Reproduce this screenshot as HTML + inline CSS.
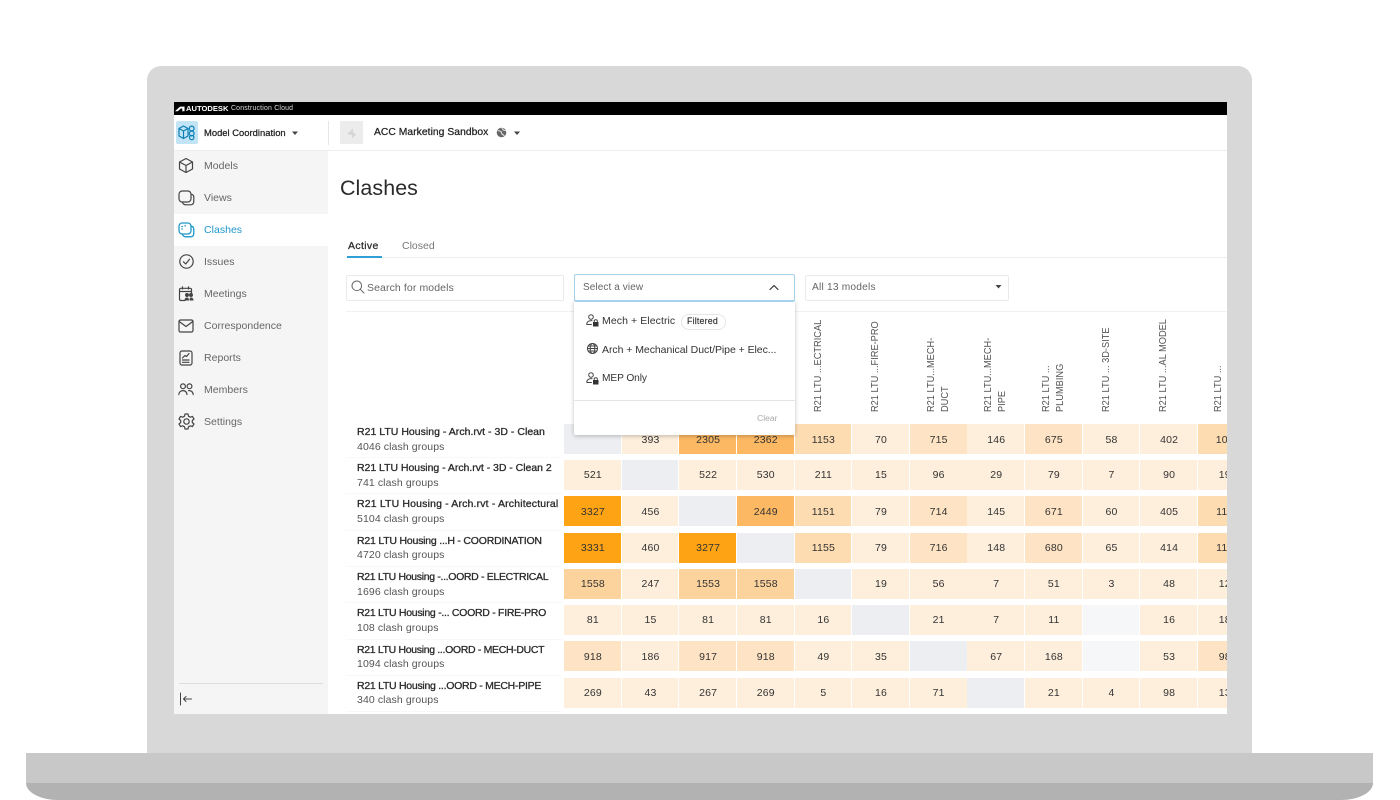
<!DOCTYPE html>
<html><head><meta charset="utf-8"><title>Clashes</title>
<style>
html,body{margin:0;padding:0;background:#fff}
body{width:1400px;height:800px;position:relative;overflow:hidden;font-family:"Liberation Sans",sans-serif;color:#333}
.b{position:absolute}
.t{position:absolute;white-space:nowrap;line-height:14px;font-size:10.5px;letter-spacing:.1px}
#screen{position:absolute;left:174px;top:102px;width:1053px;height:612px;background:#fff;overflow:hidden}
.nav{position:absolute;left:30px;color:#666;font-size:10.5px;letter-spacing:.02px;line-height:14px;white-space:nowrap}
svg{position:absolute;fill:none;stroke-linecap:round;stroke-linejoin:round}
.ic{stroke:#444;stroke-width:1.2}
.row{position:absolute;left:390px;display:flex;height:30px}
.row div{width:56.8px;margin-right:.84px;flex:none;height:30px;line-height:31px;text-align:center;text-indent:1px;font-size:10.5px;color:#333;letter-spacing:.2px}
.row.l div{line-height:33px}
.row div:nth-child(12){text-indent:-3px}
.a{background:#fea414}.p{background:#fcb862}.c{background:#fdd39d}.d{background:#fddcb2}.e{background:#fee4c4}.f{background:#feefdc}.x{background:#eceef1}.y{background:#f6f7f9}
.name{position:absolute;left:183px;font-size:10.5px;color:#2a2a2a;-webkit-text-stroke:.3px #2a2a2a;letter-spacing:.02px;white-space:nowrap;line-height:14px}
.sub{position:absolute;left:183px;font-size:10.5px;color:#555;letter-spacing:.1px;white-space:nowrap;line-height:14px}
.sep{position:absolute;left:172px;width:216px;height:1px;background:#f8f8f8}
.h{position:absolute;top:310px;transform:rotate(-90deg) scaleX(.88);transform-origin:0 0;white-space:nowrap;font-size:10.5px;line-height:12px;color:#555}
</style></head><body>
<div class="b" style="left:147px;top:66px;width:1105px;height:687px;background:#d8d8d9;border-radius:14px 14px 0 0"></div>
<div class="b" style="left:26px;top:753px;width:1347px;height:30px;background:#c8c8c8"></div>
<div class="b" style="left:26px;top:783px;width:1347px;height:17px;background:#b2b2b2;border-radius:0 0 32px 32px / 0 0 17px 17px"></div>

<div id="screen">
 <div class="b" style="left:0;top:0;width:1053px;height:13px;background:#000"></div>
 <svg style="left:1px;top:3px" width="10" height="7" viewBox="0 0 11 7"><path d="M0 6.5L5.5 1.5H10.5V6.5H8V3.5H6.5L3 6.5Z" fill="#fff"/></svg>
 <div class="t" style="left:12px;top:0;font-size:7.6px;font-weight:bold;color:#fff;line-height:13px;letter-spacing:0">AUTODESK</div>
 <div class="t" style="left:57px;top:0;font-size:6.9px;color:#ddd;line-height:13px;letter-spacing:.2px">Construction Cloud</div>

 <div class="b" style="left:0;top:48px;width:1053px;height:1px;background:#eee"></div>
 <div class="b" style="left:2px;top:19px;width:22px;height:23px;background:#c3e4f5;border-radius:2px"></div>
 <svg style="left:4px;top:22px" width="18" height="17" viewBox="0 0 18 17" stroke="#0a7fb5" stroke-width="1.2"><path d="M1 4.5L5.5 2L10 4.5V12L5.5 14.5L1 12ZM1 4.5L5.5 7L10 4.5M5.5 7V14.5"/><circle cx="13.7" cy="4.5" r="2.4"/><circle cx="13.7" cy="9.5" r="2.4"/><circle cx="13.7" cy="13.5" r="2.2"/></svg>
 <div class="t" style="left:30px;top:24px;font-size:9.4px;color:#222;letter-spacing:.02px;-webkit-text-stroke:.25px #222">Model Coordination</div>
 <svg style="left:117px;top:29px" width="8" height="5" viewBox="0 0 8 5"><path d="M1 .5H7L4 4Z" fill="#444"/></svg>
 <div class="b" style="left:154px;top:19px;width:1px;height:24px;background:#e6e6e6"></div>
 <div class="b" style="left:166px;top:19px;width:23px;height:23px;background:#ececec"></div>
 <svg style="left:170px;top:24px" width="15" height="14" viewBox="0 0 15 14"><path d="M3 8L9 2.5V6L12 9L8 12L8 9Z" fill="#d5d5d5"/></svg>
 <div class="t" style="left:200px;top:24px;font-size:10.3px;color:#222;letter-spacing:.05px;-webkit-text-stroke:.25px #222">ACC Marketing Sandbox</div>
 <svg style="left:322px;top:25px" width="11" height="11" viewBox="0 0 11 11"><circle cx="5.5" cy="5.5" r="4.8" fill="#666"/><path d="M2 3.5L5 4.5L6 7L8 8.5M6 1.5L8 3.5L10 3.5" stroke="#ddd" stroke-width="1.1"/></svg>
 <svg style="left:339px;top:29px" width="8" height="5" viewBox="0 0 8 5"><path d="M1 .5H7L4 4Z" fill="#444"/></svg>

 <!-- sidebar -->
 <div class="b" style="left:0;top:49px;width:154px;height:563px;background:#f5f5f5"></div>
 <div class="b" style="left:0;top:112px;width:154px;height:32px;background:#fff"></div>
 <div class="nav" style="top:57px">Models</div>
 <div class="nav" style="top:89px">Views</div>
 <div class="nav" style="top:121px;color:#1f97c9">Clashes</div>
 <div class="nav" style="top:153px">Issues</div>
 <div class="nav" style="top:185px">Meetings</div>
 <div class="nav" style="top:217px">Correspondence</div>
 <div class="nav" style="top:249px">Reports</div>
 <div class="nav" style="top:281px">Members</div>
 <div class="nav" style="top:313px">Settings</div>

 <svg class="ic" style="left:4px;top:55px" width="16" height="17" viewBox="0 0 16 17"><path d="M8 1.5L14.5 5V12L8 15.5L1.5 12V5ZM1.5 5L8 8.5L14.5 5M8 8.5V15.5"/></svg>
 <svg class="ic" style="left:4px;top:88px" width="17" height="16" viewBox="0 0 17 16"><rect x="1" y="1" width="12" height="11" rx="3.2"/><path d="M13 4.2C15 4.5 15.8 5.5 15.8 7.2V11.2C15.8 13.5 14.5 14.8 12.2 14.8H8C6 14.8 4.8 14 4.4 12"/></svg>
 <svg style="left:4px;top:120px;stroke:#1f97c9;stroke-width:1.3" width="17" height="16" viewBox="0 0 17 16"><rect x="1" y="1" width="12" height="11" rx="3.2"/><path d="M13 4.2C15 4.5 15.8 5.5 15.8 7.2V11.2C15.8 13.5 14.5 14.8 12.2 14.8H8C6 14.8 4.8 14 4.4 12M4 4.5H4.5M7 3.8H7.5M3.8 7H4.2"/></svg>
 <svg class="ic" style="left:5px;top:152px" width="15" height="15" viewBox="0 0 15 15"><circle cx="7.5" cy="7.5" r="6.7"/><path d="M4.5 7.8L6.7 10L10.5 5.3"/></svg>
 <svg class="ic" style="left:4px;top:184px" width="16" height="16" viewBox="0 0 16 16"><path d="M7 14.5H3C2 14.5 1.5 14 1.5 13V3.5C1.5 2.8 2 2.3 3 2.3H12C13 2.3 13.5 2.8 13.5 3.5V7M1.5 5.5H13.5M4.5 .8V3M10.5 .8V3"/><circle cx="9" cy="9" r="1.4" fill="#444"/><circle cx="13" cy="9" r="1.4" fill="#444"/><path d="M6.5 14.5C6.5 12 8 11.5 9 11.5C10 11.5 11 12 11 14.5ZM11.5 14.5C11.5 12 12 11.5 13 11.5C14 11.5 15.5 12 15.5 14.5Z" fill="#444" stroke="none"/></svg>
 <svg class="ic" style="left:4px;top:217px" width="16" height="14" viewBox="0 0 16 14"><rect x="1" y="1" width="14" height="12" rx="1.5"/><path d="M1.2 2.5L8 7.5L14.8 2.5"/></svg>
 <svg class="ic" style="left:5px;top:248px" width="14" height="16" viewBox="0 0 14 16"><rect x="1" y="1" width="12" height="14" rx="2"/><path d="M3.5 8L6 5.5L7.5 6.5L10 3.5M3.5 10H10M3.5 12.3H10"/></svg>
 <svg class="ic" style="left:4px;top:281px" width="16" height="13" viewBox="0 0 16 13"><circle cx="5" cy="3.3" r="2.4"/><circle cx="11.5" cy="3.3" r="2.4"/><path d="M.8 11.5C1 8.8 3 7.6 5 7.6C7 7.6 8.7 8.8 9 11.5M10.5 7.7C13 7.4 15 8.8 15.2 11.5"/></svg>
 <svg class="ic" style="left:4px;top:311px" width="17" height="17" viewBox="0 0 17 17"><path d="M7 1H10L10.5 3.2L12.3 4.2L14.4 3.4L16 6L14.3 7.5V9.5L16 11L14.4 13.6L12.3 12.8L10.5 13.8L10 16H7L6.5 13.8L4.7 12.8L2.6 13.6L1 11L2.7 9.5V7.5L1 6L2.6 3.4L4.7 4.2L6.5 3.2Z"/><circle cx="8.5" cy="8.5" r="2.7"/></svg>

 <div class="b" style="left:5px;top:581px;width:144px;height:1px;background:#dedede"></div>
 <svg style="left:5px;top:590px;stroke:#444;stroke-width:1" width="15" height="14" viewBox="0 0 15 14"><path d="M1.5 1V13M12.5 7H4.5M7 4.5L4.5 7L7 9.5"/></svg>

 <!-- main -->
 <div class="t" style="left:166px;top:73px;font-size:21.4px;line-height:26px;color:#2a2a2a;letter-spacing:.1px">Clashes</div>
 <div class="t" style="left:174px;top:137px;color:#2a2a2a;letter-spacing:.35px;-webkit-text-stroke:.25px #2a2a2a">Active</div>
 <div class="t" style="left:228px;top:137px;color:#777;letter-spacing:0">Closed</div>
 <div class="b" style="left:172px;top:155px;width:881px;height:1px;background:#eee"></div>
 <div class="b" style="left:173px;top:154px;width:35px;height:2px;background:#2f9fd6"></div>

 <div class="b" style="left:172px;top:173px;width:216px;height:24px;border:1px solid #eaeaea;border-radius:2px"></div>
 <svg style="left:177px;top:178px;stroke:#666;stroke-width:1" width="14" height="14" viewBox="0 0 14 14"><circle cx="5.8" cy="5.8" r="4.8"/><path d="M9.3 9.3L13 13"/></svg>
 <div class="t" style="left:193px;top:179px;color:#666;letter-spacing:.1px">Search for models</div>

 <div class="b" style="left:631px;top:173px;width:202px;height:24px;border:1px solid #eaeaea;border-radius:2px"></div>
 <div class="t" style="left:638px;top:179px;color:#666;font-size:10.2px;letter-spacing:.2px">All 13 models</div>
 <svg style="left:821px;top:183px" width="7" height="4" viewBox="0 0 7 4"><path d="M.5 0H6.5L3.5 3.5Z" fill="#444"/></svg>

 <div class="b" style="left:172px;top:209px;width:881px;height:1px;background:#f2f2f2"></div>

 <!-- rotated headers -->
 <div class="h" style="left:638px">R21 LTU ...ECTRICAL</div>
 <div class="h" style="left:695px">R21 LTU ...FIRE-PRO</div>
 <div class="h" style="left:751px">R21 LTU...MECH-</div>
 <div class="h" style="left:765px">DUCT</div>
 <div class="h" style="left:808px">R21 LTU...MECH-</div>
 <div class="h" style="left:822px">PIPE</div>
 <div class="h" style="left:866px">R21 LTU ...</div>
 <div class="h" style="left:880px">PLUMBING</div>
 <div class="h" style="left:926px">R21 LTU ... 3D-SITE</div>
 <div class="h" style="left:983px">R21 LTU ...AL MODEL</div>
 <div class="h" style="left:1038px">R21 LTU ...</div>

 <!-- rows -->
 <div class="name" style="top:323px">R21 LTU Housing - Arch.rvt - 3D - Clean</div>
 <div class="sub" style="top:338px">4046 clash groups</div>
 <div class="sep" style="top:355px"></div>
 <div class="row l" style="top:322px"><div class="x"></div><div class="f">393</div><div class="p">2305</div><div class="p">2362</div><div class="d">1153</div><div class="f">70</div><div class="e">715</div><div class="f">146</div><div class="e">675</div><div class="f">58</div><div class="f">402</div><div class="d">104</div></div>

 <div class="name" style="top:359px;letter-spacing:-.03px">R21 LTU Housing - Arch.rvt - 3D - Clean 2</div>
 <div class="sub" style="top:374px">741 clash groups</div>
 <div class="sep" style="top:391px"></div>
 <div class="row" style="top:358px"><div class="f">521</div><div class="x"></div><div class="f">522</div><div class="f">530</div><div class="f">211</div><div class="f">15</div><div class="f">96</div><div class="f">29</div><div class="f">79</div><div class="f">7</div><div class="f">90</div><div class="f">19</div></div>

 <div class="name" style="top:395px;letter-spacing:.16px">R21 LTU Housing - Arch.rvt - Architectural</div>
 <div class="sub" style="top:410px">5104 clash groups</div>
 <div class="sep" style="top:428px"></div>
 <div class="row l" style="top:394px"><div class="a">3327</div><div class="f">456</div><div class="x"></div><div class="p">2449</div><div class="d">1151</div><div class="f">79</div><div class="e">714</div><div class="f">145</div><div class="e">671</div><div class="f">60</div><div class="f">405</div><div class="d">115</div></div>

 <div class="name" style="top:432px;letter-spacing:-.21px">R21 LTU Housing ...H - COORDINATION</div>
 <div class="sub" style="top:446px">4720 clash groups</div>
 <div class="sep" style="top:464px"></div>
 <div class="row" style="top:431px"><div class="a">3331</div><div class="f">460</div><div class="a">3277</div><div class="x"></div><div class="d">1155</div><div class="f">79</div><div class="e">716</div><div class="f">148</div><div class="e">680</div><div class="f">65</div><div class="f">414</div><div class="d">116</div></div>

 <div class="name" style="top:468px;letter-spacing:-.33px">R21 LTU Housing -...OORD - ELECTRICAL</div>
 <div class="sub" style="top:483px">1696 clash groups</div>
 <div class="sep" style="top:500px"></div>
 <div class="row" style="top:467px"><div class="c">1558</div><div class="f">247</div><div class="c">1553</div><div class="c">1558</div><div class="x"></div><div class="f">19</div><div class="f">56</div><div class="f">7</div><div class="f">51</div><div class="f">3</div><div class="f">48</div><div class="f">12</div></div>

 <div class="name" style="top:504px;letter-spacing:-.28px">R21 LTU Housing -... COORD - FIRE-PRO</div>
 <div class="sub" style="top:519px">108 clash groups</div>
 <div class="sep" style="top:537px"></div>
 <div class="row" style="top:503px"><div class="f">81</div><div class="f">15</div><div class="f">81</div><div class="f">81</div><div class="f">16</div><div class="x"></div><div class="f">21</div><div class="f">7</div><div class="f">11</div><div class="y"></div><div class="f">16</div><div class="f">18</div></div>

 <div class="name" style="top:541px;letter-spacing:-.33px">R21 LTU Housing ...OORD - MECH-DUCT</div>
 <div class="sub" style="top:555px">1094 clash groups</div>
 <div class="sep" style="top:573px"></div>
 <div class="row l" style="top:539px"><div class="e">918</div><div class="f">186</div><div class="e">917</div><div class="e">918</div><div class="f">49</div><div class="f">35</div><div class="x"></div><div class="f">67</div><div class="f">168</div><div class="y"></div><div class="f">53</div><div class="e">98</div></div>

 <div class="name" style="top:577px;letter-spacing:-.27px">R21 LTU Housing ...OORD - MECH-PIPE</div>
 <div class="sub" style="top:591px">340 clash groups</div>
 <div class="sep" style="top:609px"></div>
 <div class="row" style="top:576px"><div class="f">269</div><div class="f">43</div><div class="f">267</div><div class="f">269</div><div class="f">5</div><div class="f">16</div><div class="f">71</div><div class="x"></div><div class="f">21</div><div class="f">4</div><div class="f">98</div><div class="f">13</div></div>
 <div class="row" style="top:612px"><div class="f"></div></div>

 <!-- dropdown -->
 <div class="b" style="left:400px;top:199px;width:221px;height:134px;background:#fff;box-shadow:0 1px 4px rgba(0,0,0,.25);border-radius:0 0 2px 2px"></div>
 <div class="b" style="left:400px;top:172px;width:219px;height:25px;border:1px solid #a5d2ea;border-bottom:2px solid #a5d2ea;border-radius:2px;background:#fff"></div>
 <div class="t" style="left:409px;top:179px;color:#666;font-size:10px;letter-spacing:.1px">Select a view</div>
 <svg style="left:595px;top:182px;stroke:#333;stroke-width:1.2" width="10" height="7" viewBox="0 0 10 7"><path d="M1 5.5L5 1.5L9 5.5"/></svg>

 <svg class="ic" style="left:412px;top:212px;stroke-width:1" width="13" height="13" viewBox="0 0 13 13"><circle cx="5" cy="3" r="2.3"/><path d="M.8 10C1 7.5 3 6.5 6 6.6M.8 10.5H5.5"/><rect x="7" y="8" width="5.5" height="4.5" fill="#333" stroke="none"/><path d="M8.2 8V7C8.2 5.4 11.3 5.4 11.3 7V8"/></svg>
 <div class="t" style="left:428px;top:212px;color:#333;font-size:10.5px;letter-spacing:.08px">Mech + Electric</div>
 <div class="b" style="left:507px;top:212px;width:43px;height:14px;border:1px solid #e6e6e6;border-radius:8px"></div>
 <div class="t" style="left:513px;top:212px;color:#333;font-size:8.8px;line-height:15px;letter-spacing:.2px;-webkit-text-stroke:.15px #333">Filtered</div>

 <svg class="ic" style="left:413px;top:241px;stroke-width:1" width="11" height="11" viewBox="0 0 11 11"><circle cx="5.5" cy="5.5" r="5"/><ellipse cx="5.5" cy="5.5" rx="2.3" ry="5"/><path d="M.5 5.5H10.5M1.2 3H9.8M1.2 8H9.8"/></svg>
 <div class="t" style="left:428px;top:241px;color:#333;font-size:10.5px;letter-spacing:-.05px">Arch + Mechanical Duct/Pipe + Elec...</div>

 <svg class="ic" style="left:412px;top:270px;stroke-width:1" width="13" height="13" viewBox="0 0 13 13"><circle cx="5" cy="3" r="2.3"/><path d="M.8 10C1 7.5 3 6.5 6 6.6M.8 10.5H5.5"/><rect x="7" y="8" width="5.5" height="4.5" fill="#333" stroke="none"/><path d="M8.2 8V7C8.2 5.4 11.3 5.4 11.3 7V8"/></svg>
 <div class="t" style="left:428px;top:270px;color:#333;font-size:10.2px;letter-spacing:-.1px">MEP Only</div>

 <div class="b" style="left:400px;top:298px;width:221px;height:1px;background:#e4e4e4"></div>
 <div class="t" style="left:583px;top:309px;color:#aaa;font-size:8.6px;letter-spacing:0">Clear</div>
</div>
</body></html>
